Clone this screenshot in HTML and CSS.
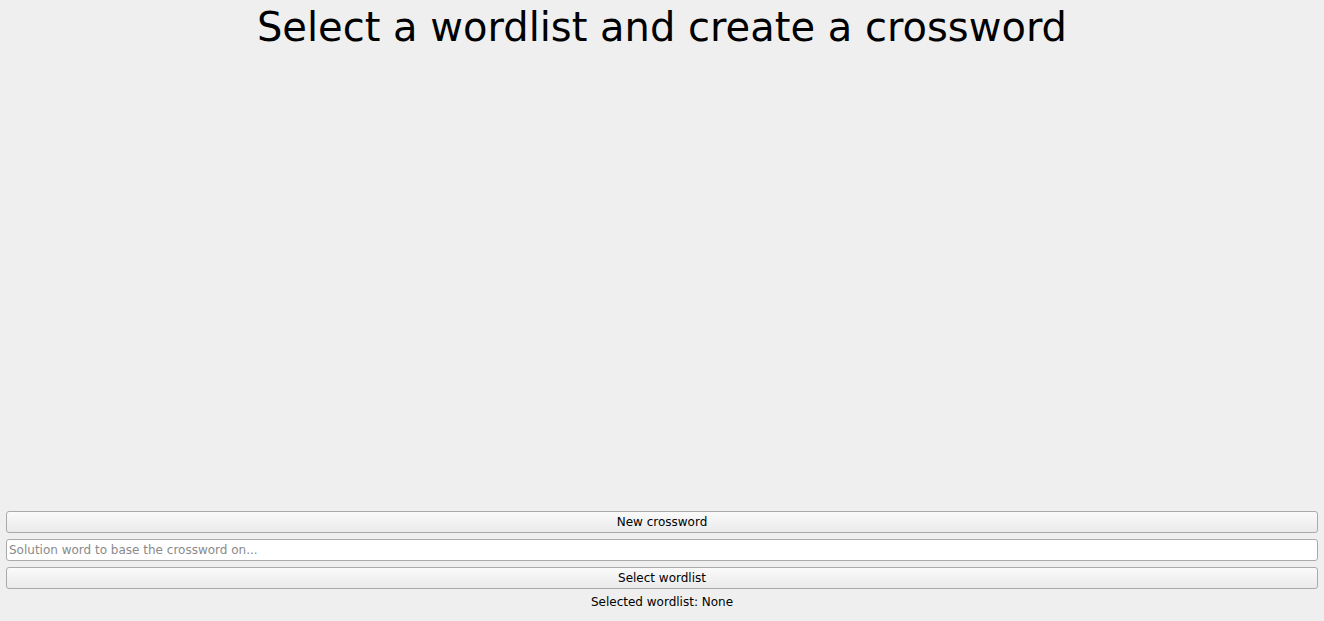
FILE: index.html
```html
<!DOCTYPE html>
<html>
<head>
<meta charset="utf-8">
<link rel="stylesheet" href="styles.css">
</head>
<body>
<div class="window">
  <h1 class="title">Select a wordlist and create a crossword</h1>
  <div class="canvas"></div>
  <div class="controls">
    <button class="btn">New crossword</button>
    <input class="field" type="text" placeholder="Solution word to base the crossword on...">
    <button class="btn">Select wordlist</button>
    <div class="status">Selected wordlist: None</div>
  </div>
</div>
</body>
</html>
```
FILE: styles.css
```css
html, body {
  margin: 0;
  padding: 0;
  background: #efefef;
}
.window {
  height: 621px;
  display: flex;
  flex-direction: column;
  padding: 0 6px;
  box-sizing: border-box;
  font-family: "DejaVu Sans", sans-serif;
  color: #000;
}
.title {
  margin: 0;
  padding-top: 2px;
  font-weight: normal;
  font-size: 40px;
  line-height: 50px;
  text-align: center;
}
.canvas {
  flex: 1;
}
.controls {
  display: flex;
  flex-direction: column;
  gap: 6px;
  padding-bottom: 12px;
}
.btn {
  height: 22px;
  box-sizing: border-box;
  border: 1px solid #aaaaaa;
  border-radius: 3px;
  background: linear-gradient(#fafafa, #eaeaea);
  font-family: "DejaVu Sans", sans-serif;
  font-size: 12px;
  color: #000;
  padding: 0;
}
.field {
  height: 22px;
  box-sizing: border-box;
  border: 1px solid #aaaaaa;
  border-radius: 3px;
  background: #fff;
  font-family: "DejaVu Sans", sans-serif;
  font-size: 12px;
  padding: 0 2px;
  outline: none;
}
.field::placeholder {
  color: #8a8a8a;
}
.status {
  font-size: 12px;
  line-height: 14px;
  text-align: center;
  margin-top: 0;
}
```
